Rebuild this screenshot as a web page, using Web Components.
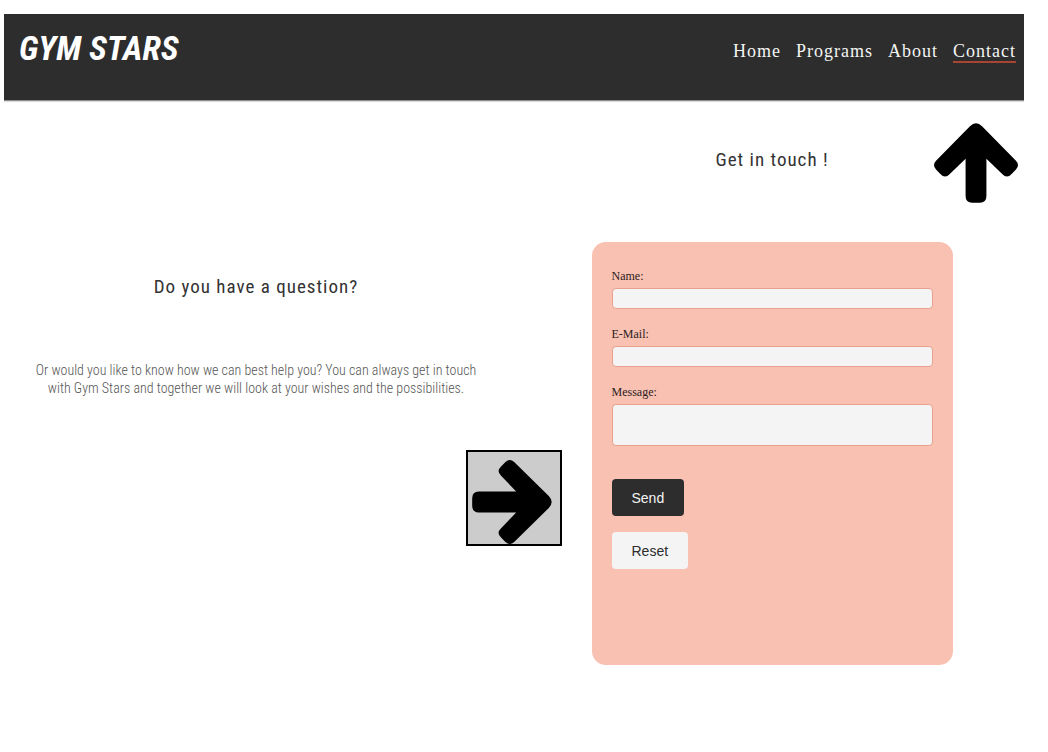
<!DOCTYPE html>
<html lang="en">
<head>
<meta charset="utf-8">
<meta name="viewport" content="width=device-width, initial-scale=1">
<title>Gym Stars - Contact</title>
<style>
  body { margin: 14px 24px 24px 4px; background: #fff; color: #2d2d2d; font-family: "Liberation Sans", Arial, sans-serif; }
</style>
</head>
<body>
<gym-page></gym-page>

<script>
const define = (name, html) => customElements.define(name, class extends HTMLElement {
  constructor() {
    super();
    this.attachShadow({ mode: "open" }).innerHTML = html;
  }
});

define("gym-header", `
<style>
  :host { display: block; }
  header { display: flex; justify-content: space-between; align-items: flex-start; min-height: 87px; box-sizing: border-box; padding: 12px 8px 0 15px; background: #2d2d2d; border-bottom: 1px solid #8c8c8c; box-shadow: 0 1px 1px #ddd; }
  .logo { color: #fff; text-decoration: none; font: italic bold 34px/44px "Roboto Condensed", Roboto, sans-serif; }
  nav { display: flex; gap: 15px; padding-top: 15px; }
  ::slotted(a) { color: #f4f4f4; text-decoration: none; font: 18px/20px "Liberation Serif", serif; letter-spacing: 1px; border-bottom: 2px solid transparent; }
  ::slotted(a[aria-current]) { border-color: #a84532; }
</style>
<header><a class="logo" href="#">GYM STARS</a><nav><slot></slot></nav></header>`);

define("section-title", `
<style>
  :host { display: block; text-align: center; }
  h2 { margin: 0; color: #333; font: 19px/28px "Roboto Condensed", Roboto, sans-serif; letter-spacing: 1px; }
</style>
<h2><slot></slot></h2>`);

define("question-panel", `
<style>
  :host { display: block; padding-top: 172px; }
  p { margin: 60px 0 0; text-align: center; color: #555; font: 300 14px/18px "Roboto Condensed", Roboto, sans-serif; }
</style>
<section-title>Do you have a question?</section-title>
<p>Or would you like to know how we can best help you? You can always get in touch<br>with Gym Stars and together we will look at your wishes and the possibilities.</p>`);

define("contact-form", `
<style>
  :host { display: block; box-sizing: border-box; width: 100%; max-width: 361px; min-height: 423px; padding: 26px 20px; background: #f8c1b2; border-radius: 14px; }
  form { display: flex; flex-direction: column; align-items: stretch; }
  label { font: 12px/16px "Liberation Serif", serif; color: #2d2020; margin-bottom: 4px; }
  input, textarea { display: block; box-sizing: border-box; width: 100%; height: 21px; margin: 0 0 17px; padding: 2px 6px; border: 1px solid #e9a08e; border-radius: 4px; background: #f4f4f4; font: 12px/16px "Liberation Sans", sans-serif; resize: none; }
  textarea { height: 42px; margin-bottom: 33px; }
  button { align-self: flex-start; height: 37px; margin: 0 0 16px; padding: 0 20px; border: 0; border-radius: 4px; background: #f4f4f4; color: #2d2d2d; font: 14px/20px "Liberation Sans", sans-serif; }
  .send { background: #2d2d2d; color: #f4f4f4; }
</style>
<form onsubmit="return false">
  <label for="name">Name:</label><input id="name" type="text">
  <label for="mail">E-Mail:</label><input id="mail" type="email">
  <label for="message">Message:</label><textarea id="message"></textarea>
  <button class="send" type="submit">Send</button>
  <button type="reset">Reset</button>
</form>`);

const arrow = "M107 9Q125-8 143 9L244 112Q256 125 244 138L231 151Q217 166 203 151L156 106V217Q156 237 136 237H114Q94 237 94 217V106L47 151Q33 166 19 151L6 138Q-6 125 6 112Z";

define("arrow-up", `
<style>:host, svg { display: block; }</style>
<svg width="84" height="80" viewBox="0 0 250 237" aria-hidden="true"><path d="${arrow}"/></svg>`);

define("arrow-right", `
<style>
  :host { display: block; box-sizing: border-box; width: 96px; height: 96px; padding: 8px 4px 0; background: #ccc; border: 2px solid #000; }
  svg { display: block; }
</style>
<svg width="80" height="84" viewBox="0 0 237 250" aria-hidden="true"><path transform="translate(237 0) rotate(90)" d="${arrow}"/></svg>`);

define("gym-page", `
<style>
  :host { display: block; }
  main { position: relative; display: grid; grid-template-columns: 1fr 1fr; gap: 12px; }
  .contact { display: flex; flex-direction: column; align-items: center; gap: 68px; padding-top: 45px; }
  arrow-up { position: absolute; top: 22px; right: 6px; }
  arrow-right { position: absolute; top: 349px; right: 50%; margin-right: -48px; }
</style>
<gym-header>
  <a href="#home">Home</a><a href="#programs">Programs</a><a href="#about">About</a><a href="#contact" aria-current="page">Contact</a>
</gym-header>
<main>
  <question-panel></question-panel>
  <section class="contact">
    <section-title>Get in touch !</section-title>
    <contact-form></contact-form>
  </section>
  <arrow-up></arrow-up>
  <arrow-right></arrow-right>
</main>`);
</script>
</body>
</html>
